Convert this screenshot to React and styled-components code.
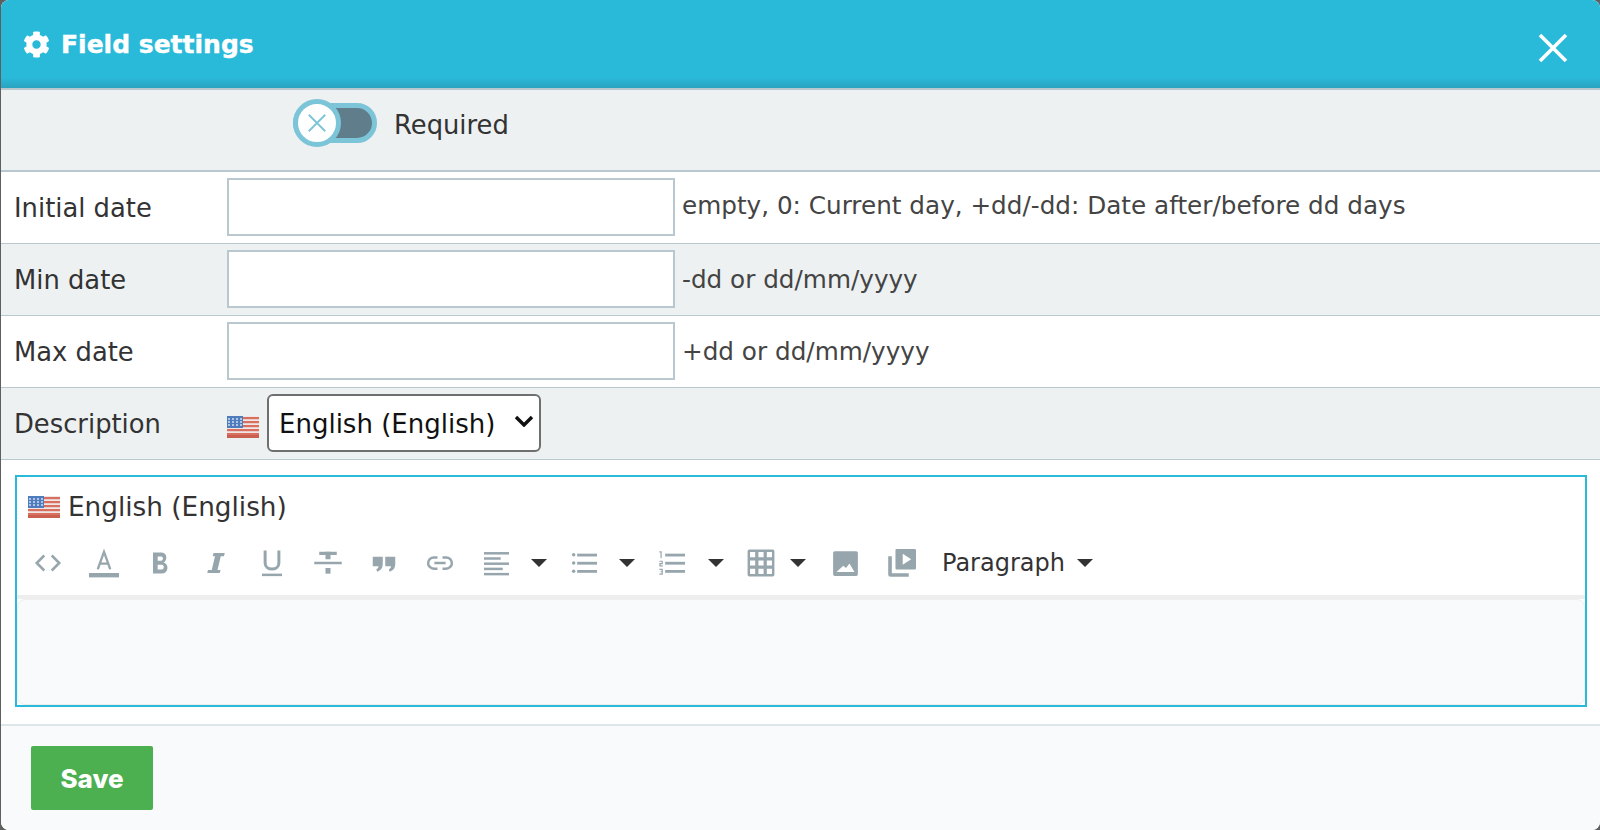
import React from 'react';
import styled, { createGlobalStyle } from 'styled-components';
import { FaCog } from 'react-icons/fa';

const GlobalStyle = createGlobalStyle`
	html, body {
		margin: 0;
		padding: 0;
		height: 830px;
		overflow: hidden;
		background: #5f5f5f;
		font-family: 'DejaVu Sans', 'Noto Sans', sans-serif;
	}
`;

const Modal = styled.div`
	margin-left: 1px;
	width: 1599px;
	height: 830px;
	display: flex;
	flex-direction: column;
	background: #fff;
	border-radius: 8px;
	overflow: hidden;
`;
const Header = styled.div`
	height: 88px;
	flex: none;
	display: flex;
	align-items: center;
	justify-content: space-between;
	padding: 0 32px 0 22px;
	color: #fff;
	background: linear-gradient(to bottom, #29b9d9 0%, #29b9d9 88%, #2aa3bf 100%);
	border-bottom: 2px solid #b9c8ce;
	box-sizing: content-box;
`;
const Title = styled.div`
	display: flex;
	align-items: center;
	gap: 11px;
	font-weight: 700;
	font-size: 25px;
	-webkit-text-stroke: 0.4px #fff;
`;
const Close = styled.svg`
	width: 30px;
	height: 30px;
	margin-top: 8px;
`;
const ToggleRow = styled.div`
	height: 82px;
	flex: none;
	box-sizing: border-box;
	padding: 0 0 14px 292px;
	display: flex;
	align-items: center;
	gap: 17px;
	background: #edf1f2;
	border-bottom: 2px solid #b9c8ce;
`;
const Track = styled.div`
	position: relative;
	width: 84px;
	height: 40px;
	box-sizing: border-box;
	border: 5px solid #7cc4d8;
	border-radius: 20px;
	background: #607d8b;
`;
const Knob = styled.div`
	position: absolute;
	left: -5px;
	top: -9px;
	width: 48px;
	height: 48px;
	box-sizing: border-box;
	display: flex;
	align-items: center;
	justify-content: center;
	border: 5px solid #7cc4d8;
	border-radius: 50%;
	background: #fff;
`;
const Label = styled.span`
	margin-top: 4px;
	font-size: 25.8px;
	color: #333;
`;
const Row = styled.div`
	height: 71px;
	flex: none;
	display: flex;
	align-items: center;
	box-sizing: content-box;
	background: ${p => (p.$alt ? '#edf1f2' : '#fff')};
	border-bottom: 1.5px solid #b9c8ce;
`;
const RowLabel = styled.div`
	width: 226px;
	flex: none;
	padding-left: 13px;
	box-sizing: border-box;
	font-size: 25.8px;
	color: #333;
`;
const Input = styled.input`
	width: 448px;
	height: 58px;
	margin-bottom: 2px;
	flex: none;
	box-sizing: border-box;
	border: 2px solid #b9c8ce;
	background: #fff;
	outline: none;
`;
const Hint = styled.span`
	margin-left: 7px;
	padding-bottom: ${p => p.$up || 0}px;
	font-size: 24.7px;
	color: #444;
`;
const FlagIcon = styled.svg`
	width: 32px;
	height: 22px;
	flex: none;
	filter: blur(0.6px);
	margin-top: ${p => p.$down || 0}px;
`;
const SelectWrap = styled.div`
	position: relative;
	margin: 0 0 2px 8px;
	width: 274px;
	height: 58px;
`;
const Select = styled.select`
	appearance: none;
	width: 100%;
	height: 100%;
	padding: 3px 0 0 10px;
	font-family: 'DejaVu Sans', sans-serif;
	font-size: 26px;
	color: #111;
	background: #fff;
	border: 2px solid #6f6f6f;
	border-radius: 6px;
`;
const Chevron = styled.svg`
	position: absolute;
	right: 7px;
	top: 21px;
	width: 20px;
	height: 12px;
	pointer-events: none;
`;
const EditorWrap = styled.div`
	flex: 1;
	padding: 15px 13px 17px 14px;
	background: #fff;
	display: flex;
`;
const Editor = styled.div`
	flex: 1;
	display: flex;
	flex-direction: column;
	border: 2px solid #29b9d9;
`;
const LangLine = styled.div`
	display: flex;
	align-items: center;
	gap: 8px;
	height: 60px;
	padding-left: 11px;
	box-sizing: border-box;
	font-size: 26.3px;
	color: #333;
`;
const Toolbar = styled.div`
	height: 62px;
	flex: none;
	display: flex;
	align-items: center;
	padding: 0 0 6px 3px;
	border-bottom: 4px solid #eeeeee;
	box-sizing: border-box;
`;
const ToolButton = styled.div`
	width: ${p => p.$w || 56}px;
	flex: none;
	display: flex;
	align-items: center;
	justify-content: center;
`;
const ToolSvg = styled.svg`
	width: ${p => p.$size || 30}px;
	height: ${p => p.$size || 30}px;
	fill: #97a6ad;
`;
const Caret = styled.span`
	width: 0;
	height: 0;
	border-left: 8px solid transparent;
	border-right: 8px solid transparent;
	border-top: 8px solid #333;
`;
const Paragraph = styled.div`
	display: flex;
	align-items: center;
	gap: 12px;
	margin-left: 24px;
	font-size: 24px;
	color: #333;
`;
const Content = styled.div`
	flex: 1;
	background: #f9fafb;
	border: 1.5px solid #eeeeee;
	border-radius: 8px;
`;
const Footer = styled.div`
	height: 106px;
	flex: none;
	box-sizing: border-box;
	padding: 20px 0 0 30px;
	background: #f9fafb;
	border-top: 2px solid #dfe6e9;
`;
const SaveButton = styled.button`
	width: 122px;
	height: 64px;
	border: none;
	border-radius: 2px;
	background: #4caf50;
	color: #fff;
	font-family: Inter, sans-serif;
	font-weight: 800;
	font-size: 26px;
`;

const Flag = ({ down }) => (
	<FlagIcon viewBox='0 0 32 22' $down={down}>
		<rect width='32' height='22' fill='#efe6e6' />
		{[0, 4, 8, 12, 16].map(y => (
			<rect key={y} y={y + 1} width='32' height='2.2' fill='#d9705f' />
		))}
		<rect y='19' width='32' height='3' fill='#c9604f' />
		<rect width='16' height='12' fill='#4f7cbc' />
		{[3, 7, 11, 15].map(x =>
			[3, 6, 9].map(y => <circle key={`${x}-${y}`} cx={x - 1} cy={y} r='0.9' fill='#dfe8f5' />)
		)}
	</FlagIcon>
);

const Icon = ({ children, size }) => (
	<ToolSvg viewBox='0 0 24 24' $size={size}>
		{children}
	</ToolSvg>
);

const bars = (rows, x = 3) =>
	rows.map(([y, w]) => <rect key={y} x={x} y={y} width={w} height='2.4' />);

const dots = [5, 12, 19].map(y => <circle key={y} cx='4' cy={y} r='1.5' />);

const App = () => (
	<Modal>
		<GlobalStyle />
		<Header>
			<Title>
				<FaCog size={27} />
				Field settings
			</Title>
			<Close viewBox='0 0 30 30'>
				<path d='M2 2 L28 28 M28 2 L2 28' stroke='#fff' strokeWidth='3.6' />
			</Close>
		</Header>
		<ToggleRow>
			<Track>
				<Knob>
					<svg width='22' height='22' viewBox='0 0 24 24'>
						<path d='M3 3 L21 21 M21 3 L3 21' stroke='#7cc4d8' strokeWidth='2' />
					</svg>
				</Knob>
			</Track>
			<Label>Required</Label>
		</ToggleRow>
		<Row>
			<RowLabel>Initial date</RowLabel>
			<Input />
			<Hint $up={4}>empty, 0: Current day, +dd/-dd: Date after/before dd days</Hint>
		</Row>
		<Row $alt>
			<RowLabel>Min date</RowLabel>
			<Input />
			<Hint>-dd or dd/mm/yyyy</Hint>
		</Row>
		<Row>
			<RowLabel>Max date</RowLabel>
			<Input />
			<Hint>+dd or dd/mm/yyyy</Hint>
		</Row>
		<Row $alt>
			<RowLabel>Description</RowLabel>
			<Flag down={6} />
			<SelectWrap>
				<Select defaultValue='en'>
					<option value='en'>English (English)</option>
				</Select>
				<Chevron viewBox='0 0 20 12'>
					<path d='M2 2 L10 10 L18 2' fill='none' stroke='#111' strokeWidth='3.4' />
				</Chevron>
			</SelectWrap>
		</Row>
		<EditorWrap>
			<Editor>
				<LangLine>
					<Flag />
					English (English)
				</LangLine>
				<Toolbar>
					<ToolButton>
						<Icon>
							<path d='M9 6 L3 12 L9 18 M15 6 L21 12 L15 18' fill='none' stroke='#97a6ad' strokeWidth='2' />
						</Icon>
					</ToolButton>
					<ToolButton>
						<Icon>
							<path d='M7 17 L12 3 L17 17 M8.5 12.5 H15.5' fill='none' stroke='#97a6ad' strokeWidth='1.8' />
							<rect x='0' y='20' width='24' height='3.5' />
						</Icon>
					</ToolButton>
					<ToolButton>
						<Icon size={28}>
							<path d='M6 3 H13.5 C18.5 3 18.5 10.5 15 11.5 C20 12.5 19.5 21 13.5 21 H6 Z M10 6.5 V10 H13 C15 10 15 6.5 13 6.5 Z M10 13.5 V17.5 H13.5 C15.8 17.5 15.8 13.5 13.5 13.5 Z' fillRule='evenodd' />
						</Icon>
					</ToolButton>
					<ToolButton>
						<Icon>
							<path d='M10 4 H19 L18.4 6.5 H15.8 L13.2 17.5 H15.6 L15 20 H5 L5.6 17.5 H8.6 L11.2 6.5 H9.4 Z' />
						</Icon>
					</ToolButton>
					<ToolButton>
						<Icon>
							<path d='M6.5 2 V12 C6.5 18.5 17.5 18.5 17.5 12 V2' fill='none' stroke='#97a6ad' strokeWidth='2.4' />
							<rect x='4' y='20.5' width='16' height='2' />
						</Icon>
					</ToolButton>
					<ToolButton>
						<Icon>
							<rect x='1' y='11' width='22' height='2' />
							<rect x='5' y='3' width='14' height='2.6' />
							<rect x='10' y='3' width='4' height='6' />
							<rect x='10' y='16' width='4' height='4.5' />
						</Icon>
					</ToolButton>
					<ToolButton>
						<Icon>
							<path d='M3 7 H11 V13 C11 16 9.5 18 6.5 19 L5.8 17 C7 16.5 7.6 15.5 7.6 14.5 H3 Z M13 7 H21 V13 C21 16 19.5 18 16.5 19 L15.8 17 C17 16.5 17.6 15.5 17.6 14.5 H13 Z' />
						</Icon>
					</ToolButton>
					<ToolButton>
						<Icon>
							<path d='M10 7.5 H7 A4.5 4.5 0 0 0 7 16.5 H10 M14 7.5 H17 A4.5 4.5 0 0 1 17 16.5 H14 M7.5 12 H16.5' fill='none' stroke='#97a6ad' strokeWidth='2' />
						</Icon>
					</ToolButton>
					<ToolButton>
						<Icon size={25}>{bars([[1, 24], [6, 16], [11, 24], [16, 18], [21, 24]], 0)}</Icon>
					</ToolButton>
					<ToolButton $w={30}>
						<Caret />
					</ToolButton>
					<ToolButton $w={58}>
						<Icon size={28}>
							{dots}
							{bars([[4, 17], [11, 17], [18, 17]], 7)}
						</Icon>
					</ToolButton>
					<ToolButton $w={30}>
						<Caret />
					</ToolButton>
					<ToolButton $w={58}>
						<Icon size={28}>
							<path d='M2 2 H4 V8 H3 V3 H2 Z M2 10 H5 V13 H3 V14 H5 V15 H2 V12 H4 V11 H2 Z M2 17 H5 V22 H2 V21 H4 V20 H3 V19 H4 V18 H2 Z' />
							{bars([[4, 17], [11, 17], [18, 17]], 7)}
						</Icon>
					</ToolButton>
					<ToolButton $w={32}>
						<Caret />
					</ToolButton>
					<ToolButton $w={58}>
						<Icon size={28}>
							<path d='M2 0.5 H22 A1.5 1.5 0 0 1 23.5 2 V22 A1.5 1.5 0 0 1 22 23.5 H2 A1.5 1.5 0 0 1 0.5 22 V2 A1.5 1.5 0 0 1 2 0.5 Z M2.6 2.6 V7 H7 V2.6 Z M9.8 2.6 V7 H14.2 V2.6 Z M17 2.6 V7 H21.4 V2.6 Z M2.6 9.8 V14.2 H7 V9.8 Z M9.8 9.8 V14.2 H14.2 V9.8 Z M17 9.8 V14.2 H21.4 V9.8 Z M2.6 17 V21.4 H7 V17 Z M9.8 17 V21.4 H14.2 V17 Z M17 17 V21.4 H21.4 V17 Z' fillRule='evenodd' />
						</Icon>
					</ToolButton>
					<ToolButton $w={16}>
						<Caret />
					</ToolButton>
					<ToolButton $w={78}>
						<Icon size={27}>
							<path d='M2.5 1 H21.5 A1.5 1.5 0 0 1 23 2.5 V21.5 A1.5 1.5 0 0 1 21.5 23 H2.5 A1.5 1.5 0 0 1 1 21.5 V2.5 A1.5 1.5 0 0 1 2.5 1 Z M4 19.5 H20 L15.5 12 L12.5 16 L10 14 Z' fillRule='evenodd' />
						</Icon>
					</ToolButton>
					<ToolButton $w={34}>
						<Icon size={29}>
							<path d='M7 1 A1 1 0 0 1 8 0 H23 A1 1 0 0 1 24 1 V16 A1 1 0 0 1 23 17 H8 A1 1 0 0 1 7 16 Z M13 4 V13 L20 8.5 Z' fillRule='evenodd' />
							<path d='M1 6 H4 V20 H18 V23 H3 A2 2 0 0 1 1 21 Z' />
						</Icon>
					</ToolButton>
					<Paragraph>
						Paragraph
						<Caret />
					</Paragraph>
				</Toolbar>
				<Content />
			</Editor>
		</EditorWrap>
		<Footer>
			<SaveButton>Save</SaveButton>
		</Footer>
	</Modal>
);

export default App;
